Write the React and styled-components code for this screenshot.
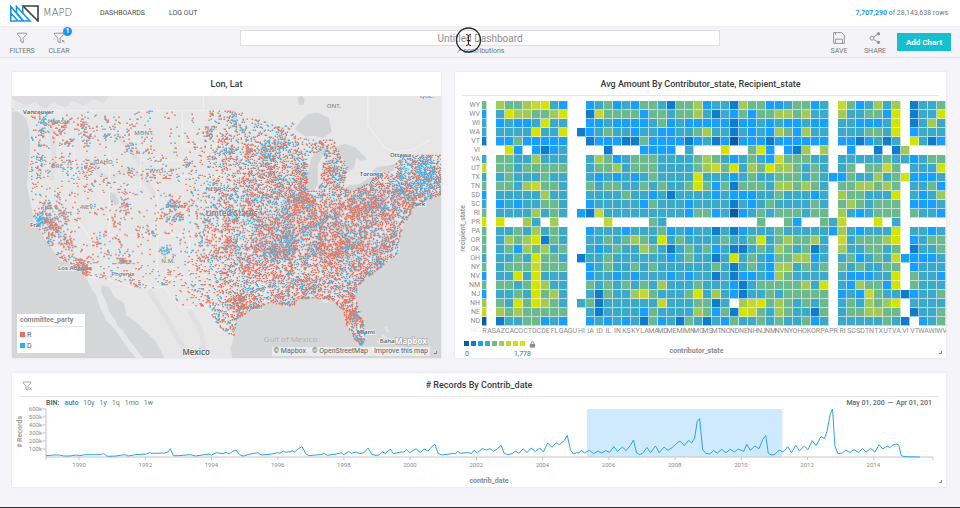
import React from "react";
import styled, { createGlobalStyle, css } from "styled-components";

const GlobalStyle = createGlobalStyle`
  * { box-sizing: border-box; }
  body {
    margin: 0;
    background: #f5f4f8;
    color: #444;
    font-family: Roboto, "Liberation Sans", sans-serif;
    font-size: 7px;
    line-height: 8px;
  }
  button, input { font-family: inherit; }
`;

/* ---------- shell ---------- */

const Page = styled.div`
  min-height: 100vh;
  border-bottom: 1px solid #2e2e30;
`;

const Nav = styled.nav`
  display: flex;
  align-items: center;
  height: 27px;
  padding: 0 12px 0 10px;
  background: #fff;
  border-bottom: 1px solid #ededf0;
`;

const Brand = styled.a`
  display: flex;
  align-items: center;
  gap: 4px;
  width: 90px;
  color: #55565a;
  text-decoration: none;
  font: 200 10px/12px "DejaVu Sans", sans-serif;
`;

const NavLink = styled.a`
  margin-right: 24px;
  color: #4c4c50;
  font-size: 7px;
  text-decoration: none;
`;

const RowCount = styled.div`
  margin-left: auto;
  font-size: 7px;
  color: #77777b;
  b { color: #1e9be6; }
`;

const Toolbar = styled.header`
  display: grid;
  grid-template-columns: 1fr 50% 1fr;
  height: 31px;
  background: #f4f3f7;
  border-bottom: 1px solid #e4e4e7;
`;

const Tools = styled.div`
  display: flex;
  align-items: center;
  gap: ${(p) => (p.$end ? 8 : 9)}px;
  padding: 0 9px 0 8px;
  justify-content: ${(p) => (p.$end ? "flex-end" : "flex-start")};
`;

const ToolButton = styled.button`
  position: relative;
  display: flex;
  flex-direction: column;
  align-items: center;
  gap: 3px;
  width: 28px;
  margin: 0;
  padding: 2px 0 0;
  border: 0;
  background: none;
  color: #77777b;
  font-size: 7px;
  line-height: 8px;
  svg { color: #8e8e92; }
`;

const Badge = styled.span`
  position: absolute;
  top: -3px;
  right: 1px;
  width: 9px;
  height: 9px;
  border-radius: 50%;
  background: #1795f0;
  color: #fff;
  font-weight: 700;
  font-size: 7px;
  line-height: 9px;
  text-align: center;
`;

const AddButton = styled.button`
  height: 18px;
  width: 54px;
  padding: 0;
  border: 0;
  background: #17bfce;
  color: #fff;
  font-size: 8px;
  font-weight: 700;
`;

const TitleBlock = styled.div`
  position: relative;
  padding-top: 3px;
  text-align: center;
`;

const TitleInput = styled.input`
  display: block;
  width: 100%;
  height: 16px;
  padding: 0;
  border: 1px solid #dedee1;
  background: #fff;
  text-align: center;
  font-size: 10px;
  &::placeholder { color: #8d8d91; opacity: 1; }
`;

const Source = styled.div`
  margin-top: 1px;
  font-size: 7px;
  color: #77777b;
`;

const Pointer = styled.svg`
  position: absolute;
  top: 0;
  left: calc(50% - 25px);
`;

/* ---------- cards ---------- */

const Board = styled.main`
  display: grid;
  grid-template-columns: 429fr 491fr;
  gap: 15px 14px;
  padding: 14px 14px 20px 12px;
`;

const Card = styled.section`
  position: relative;
  display: flex;
  flex-direction: column;
  min-width: 0;
  background: #fff;
  box-shadow: 0 0 2px #d9d9dd;
  ${(p) => p.$wide && css`grid-column: 1 / -1;`}
`;

const CardHeader = styled.div`
  position: relative;
  display: flex;
  align-items: center;
  justify-content: center;
  height: 24px;
  margin: 0 7px;
  border-bottom: 1px solid ${(p) => (p.$line ? "#e8e5ea" : "transparent")};
`;

const CardTitle = styled.h2`
  margin: 0;
  color: #39393d;
  font-size: 9px;
  line-height: 10px;
  font-weight: 500;
`;

const HeaderIcon = styled.button`
  position: absolute;
  left: 3px;
  top: 6px;
  padding: 0;
  border: 0;
  background: none;
  color: #8e8e92;
`;

const Corner = styled.span`
  position: absolute;
  right: 4px;
  bottom: 4px;
  width: 3px;
  height: 3px;
  border: solid #8a8a8e;
  border-width: 0 1px 1px 0;
`;

const AxisTitle = styled.div`
  color: #8b8b8f;
  font-size: 7px;
  font-weight: 700;
  text-align: center;
  white-space: nowrap;
`;

const SideTitle = styled(AxisTitle)`
  color: #9c9ca0;
  writing-mode: vertical-rl;
  transform: rotate(180deg);
`;

/* ---------- map ---------- */

const MapFrame = styled.div`
  position: relative;
  height: 262px;
  overflow: hidden;
  background: #d5d6d7;
`;

const MapSvg = styled.svg`
  display: block;
  width: 100%;
  height: 100%;
`;

const MapLegend = styled.div`
  position: absolute;
  left: 5px;
  bottom: 5px;
  width: 68px;
  padding: 2px 2px 2px 3px;
  background: #fff;
  color: #55555a;
`;

const LegendTitle = styled.div`
  padding-bottom: 2px;
  margin-bottom: 2px;
  border-bottom: 1px solid #e4e4e6;
  color: #8b8b8f;
  font-weight: 700;
`;

const LegendItem = styled.div`
  display: flex;
  align-items: center;
  gap: 2px;
  height: 11px;
  &::before {
    content: "";
    width: 5px;
    height: 5px;
    background: ${(p) => p.$color};
  }
`;

const Credits = styled.div`
  position: absolute;
  right: 11px;
  bottom: 2px;
  display: flex;
  gap: 6px;
  padding: 0 2px;
  background: rgba(255, 255, 255, 0.5);
  a { color: #66666a; text-decoration: none; font-size: 7px; line-height: 9px; }
`;

/* ---------- heat map ---------- */

const Heat = styled.div`
  display: grid;
  grid-template-columns: 5px 22px minmax(0, 1fr);
  padding-top: 5px;
  overflow: hidden;
`;

const HeatSide = styled(SideTitle)`
  align-self: center;
  justify-self: center;
  margin: 20px 0 0 10px;
`;

const RowLabels = styled.div`
  padding-right: 2px;
  color: #8b8b8f;
  text-align: right;
`;

const RowLabel = styled.div`
  height: 9px;
  line-height: 8px;
  color: ${(p) => (p.$faint ? "#ececef" : "inherit")};
`;

const Cells = styled.div`
  display: grid;
  grid-template-columns: 5px repeat(51, minmax(0, 1fr));
  grid-auto-rows: 9px;
`;

const PALETTE = ["#0b5ca4", "#0f7ccc", "#189fff", "#3ca9c8", "#6cb98f", "#a3ca57", "#c6d735", "#d0dd18", "#d3e400"];

const Cell = styled.span`
  border: solid rgba(255, 255, 255, 0.6);
  border-width: 0 1px 1px 0;
  background: ${(p) => PALETTE[p.$level] || "#fff"};
`;

const ColLabel = styled.span`
  display: flex;
  justify-content: center;
  padding-top: 1px;
  color: #8b8b8f;
  line-height: 8px;
`;

const HeatFooter = styled.div`
  display: grid;
  grid-template-columns: 1fr auto 1fr;
  padding: 6px 9px 0 9px;
`;

const FooterTitle = styled(AxisTitle)`
  align-self: end;
  padding: 0 8px 3px 0;
`;

const Scale = styled.div`
  display: grid;
  grid-template-columns: 61px 10px;
  gap: 2px 4px;
`;

const Swatches = styled.div`
  display: grid;
  grid-template-columns: repeat(9, 1fr);
  gap: 2px;
  height: 5px;
`;

const Swatch = styled.span`
  background: ${(p) => PALETTE[p.$level]};
`;

const ScaleEnds = styled.div`
  grid-column: 1 / -1;
  display: flex;
  justify-content: space-between;
  padding: 0 8px 0 1px;
  color: #66666a;
`;

/* ---------- time line ---------- */

const BinRow = styled.div`
  display: flex;
  gap: 5px;
  padding: 2px 14px 2px 34px;
  color: #66666a;
  font-size: 7px;
`;

const BinButton = styled.button`
  padding: 0;
  border: 0;
  background: none;
  color: ${(p) => (p.$on ? "#1e9be6" : "#77777b")};
  font-weight: ${(p) => (p.$on ? 700 : 400)};
  font-size: 7px;
  line-height: 8px;
`;

const DateRange = styled.div`
  display: flex;
  gap: 3px;
  margin-left: auto;
  font-weight: 500;
`;

const Timeline = styled.div`
  display: grid;
  grid-template-columns: 9px 21px minmax(0, 1fr);
  padding: 0 13px 0 4px;
`;

const PlotSide = styled(SideTitle)`
  align-self: start;
  margin-top: 7px;
`;

const YTicks = styled.div`
  display: grid;
  grid-template-rows: repeat(6, 8px);
  margin-top: -4px;
  padding-right: 4px;
  color: #8b8b8f;
  font-size: 6px;
  text-align: right;
`;

const Plot = styled.svg`
  display: block;
  width: 100%;
  height: 52px;
  overflow: visible;
  path, line { vector-effect: non-scaling-stroke; }
`;

const XTicks = styled.div`
  display: grid;
  grid-template-columns: repeat(13, 1fr);
  padding-right: 3%;
  color: #8b8b8f;
  font-size: 6px;
  text-align: center;
`;

const XTitle = styled(AxisTitle)`
  padding: 8px 0 2px 20px;
`;

/* ---------- data ---------- */

const COLS = "R AS AZ CA CO CT DC DE FL GA GU HI IA ID IL IN KS KY LA MA MD ME MI MN MO MS MT NC ND NE NH NJ NM NV NY OH OK OR PA PR RI SC SD TN TX UT VA VI VT WA WI WV".split(" ");

const ROWS = [
  ["WY", "4. 54456832 .. 2342324431445 23315442234423 . 6423535 . 1334"],
  ["WV", "2. 38554458 .. 1644442443445 31324244554533 . 5334428 . 1338"],
  ["WI", "3. 23223833 .. 2232222342322 22212232322322 . 3322238 . 1353"],
  ["WA", "3. 33338338 .1 2343323322334 53313232542533 . 3334438 . 2333"],
  ["VT", "1. 22422222 .. 1222114222212 31202221222222 . 2212313 . 8312"],
  ["VI", ".. .82.2123 .. ..1...2222.3. ..8..482.215.5 . .2..1.1 5 ...."],
  ["VA", "3. 44335333 .. 3542344433334 54323432644433 . 3333343 3 2344"],
  ["UT", "6. 44344444 .. 3445344433334 56483548554343 . 34.4464 . 3338"],
  ["TX", "3. 34333433 .. 3232323433338 33323433444343 2 2433534 8 2223"],
  ["TN", "4. 44356443 .. 4344334343348 42414443554543 . 4455454 . 3342"],
  ["SD", "2. 33333533 .. 3333433231333 32322233433323 . 5443338 . 3235"],
  ["SC", "3. 23233443 .. 2333332433323 33313234333343 . 4543444 . 2223"],
  ["RI", "4. 33335343 .2 1633333333324 42302343444344 . 5323444 . 4332"],
  ["PR", "8. 8..53.5. .. ..6....43.... ......4..42..4 3 6...8.3 . ...."],
  ["PA", "4. 33435343 .. 2333233342323 31312333433333 2 5323338 . 3323"],
  ["OR", "4. 35458143 .. 3343454383433 33433483454453 . 6344458 . 2344"],
  ["OK", "4. 34254534 .. 3234335431343 42311343543413 . 5334434 . 1334"],
  ["OH", "3. 33438443 .1 3343333332343 31383432445523 . 3423436 2 2223"],
  ["NY", "4. 34446444 .. 2343343433333 34313432553434 . 4343344 . 2333"],
  ["NV", "2. 33838333 .. 2332323332323 31312232543333 . 3222338 . 4332"],
  ["NM", "4. 44348533 .. 4343434353334 33321344444538 . 3254428 . 4333"],
  ["NJ", "2. 33438453 .. 3143356433348 35321334344444 . 2326433 1 2334"],
  ["NH", "5. 43848543 .3 4133333363334 413.5684543434 . 3435458 . 3333"],
  ["NE", "6. 54544444 .. 3133332433335 42418643543314 . 3445544 . 1334"],
  ["ND", "0. 13344232 .. 2323231423143 13243343433423 . 3333343 1 .234"],
].map(([name, cells]) => ({ name, cells: cells.replace(/ /g, "").split("") }));

const SERIES =
  "76,273 90,271 98,271 105,274 115,274 125,271 131,273 140,270 165,270 170,266 175,274 180,275 190,274 205,270 210,274 222,270 240,268 245,264 250,266 270,265 275,262 279,252 284,273 292,273 305,271 312,270 320,274 335,270 342,268 346,271 354,264 365,267 370,263 375,268 380,261 386,256 392,270 398,274 410,268 422,264 427,271 445,268 455,264 458,266 463,259 468,263 478,259 482,262 488,252 494,246 500,267 505,273 515,271 525,270 530,266 535,272 550,268 558,264 562,270 570,261 575,266 582,262 588,267 595,264 602,250 608,270 615,272 620,271 625,262 630,266 638,253 643,267 655,262 660,262 665,255 670,264 680,252 687,264 693,253 700,259 705,247 711,239 716,266 722,271 735,268 740,266 745,267 748,260 752,266 765,264 770,266 775,257 780,265 788,252 795,256 801,252 806,260 812,254 819,242 824,266 830,270 838,266 842,259 848,266 855,252 861,264 868,250 875,261 882,250 888,262 895,235 902,248 909,234 914,240 922,228 927,212 932,255 937,268 942,264 946,265 950,257 955,265 963,257 970,267 977,259 983,265 990,258 996,263 1003,246 1009,260 1017,247 1023,258 1030,242 1035,226 1040,264 1045,270 1051,264 1057,248 1063,264 1071,244 1077,264 1085,247 1091,257 1098,249 1105,237 1111,229 1118,243 1125,227 1130,235 1135,220 1139,170 1143,162 1148,255 1153,266 1159,268 1166,258 1172,265 1179,254 1186,264 1193,254 1200,262 1206,253 1215,260 1220,239 1226,257 1233,244 1240,252 1246,224 1251,213 1255,265 1260,271 1266,269 1273,256 1279,262 1287,246 1293,264 1300,241 1306,259 1314,244 1320,255 1327,228 1333,243 1341,216 1347,222 1351,200 1356,150 1360,133 1364,245 1369,267 1376,265 1382,256 1388,264 1395,255 1402,263 1409,252 1415,262 1422,251 1429,262 1436,240 1442,253 1449,244 1454,249 1458,241 1464,238 1468,241 1472,272 1476,276 1503,277";

const YEARS = [1990, 1992, 1994, 1996, 1998, 2000, 2002, 2004, 2006, 2008, 2010, 2012, 2014];
const COUNTS = ["600k", "500k", "400k", "300k", "200k", "100k"];

/* Coast lines and lakes */
const LAND =
  "M13 96V108L20 113L27 118L30 130L31 145L30 160L29 175L28 185L30 197L33 210L35 222L40 227L43 235L50 245L57 255L61 261L68 263L76 267L82 271L87 278L92 288L97 295L100 305L107 320L115 328L123 340L130 350L137 358H144L138 350L130 340L124 331L118 325L115 318L110 312L107 302L102 291L102 285L110 287L115 297L125 303L127 315L137 322L147 332L157 342L162 352L165 358H233L231 348L234 338L235 326L237 318L243 314L251 310L262 303L270 302L280 304L288 307L293 306L291 301L297 298L305 297L318 297L326 303L333 299L340 305L345 312L345 322L350 331L354 338L360 342L364 340L365 330L362 318L357 307L355 296L358 285L370 275L384 264L392 258L399 253L400 247L398 240L401 232L403 225L408 216L415 206L425 200L441 194V96Z";

const LAKES = [
  "M295 129L303 119L309 114L318 113L329 118L332 132L324 138L313 136L306 137Z",
  "M307 189L308 172L312 157L319 149L329 147L323 155L318 166L318 184L314 191Z",
  "M336 147L345 144L356 148L366 158L367 160L360 161L357 158L354 168L349 172L345 166L342 156Z",
  "M343 189L350 185L360 184L373 175L374 178L365 186L352 191L345 193Z",
  "M370 174L377 167L388 166L397 163L393 171L381 174Z",
  "M298 98l4 -2l3 4l-1 5l-5 0z",
  "M232 111l4 0l2 10l-3 6l-3 -8z",
  "M110 192l6 2l4 8l-3 4l-6 -6z",
];

const COUNTRY = [
  [28, 119], [34, 111], [232, 111], [240, 112], [262, 121], [282, 127], [295, 121], [288, 132], [307, 139], [322, 140], [334, 139],
  [336, 148], [343, 158], [348, 168], [345, 178], [343, 188], [352, 190], [370, 182], [375, 174], [394, 171], [398, 155], [441, 155],
  [441, 194], [425, 200], [415, 206], [408, 216], [403, 225], [398, 240], [400, 250], [384, 264], [370, 275], [358, 285], [355, 296],
  [358, 308], [364, 325], [365, 338], [361, 345], [354, 338], [346, 325], [343, 310], [333, 300], [318, 298], [297, 299],
  [293, 306], [270, 302], [251, 310], [237, 318], [234, 335], [222, 331], [214, 318], [207, 305], [193, 307], [182, 308],
  [172, 295], [165, 285], [150, 288], [132, 287], [105, 278], [84, 275], [68, 263], [57, 255], [43, 235], [34, 218], [28, 185], [31, 160], [31, 140],
];

/* Population centres: x, y, radius, strength, share of D */
const CITIES = [
  [43, 122, 6, 0.8, 0.65], [42, 132, 5, 0.6, 0.5], [41, 145, 4, 0.6, 0.6], [40, 158, 4, 0.9, 0.6], [39, 166, 3, 0.6, 0.6], [40, 175, 4, 0.6, 0.35], [38, 184, 4, 0.5, 0.4],
  [32, 138, 2, 0.4, 0.8], [32, 150, 2, 0.5, 0.8], [31, 162, 2, 0.4, 0.8], [31, 170, 2, 0.4, 0.8], [30, 192, 3, 0.4, 0.5], [45, 203, 6, 0.4, 0.3],
  [82, 124, 6, 0.7, 0.3], [64, 128, 7, 0.4, 0.35], [70, 142, 6, 0.4, 0.2], [86, 136, 6, 0.4, 0.4], [107, 122, 3, 0.6, 0.5], [107, 136, 3, 0.6, 0.6], [130, 147, 6, 0.4, 0.7],
  [125, 133, 6, 0.2, 0.6], [147, 150, 4, 0.4, 0.5], [53, 163, 3, 0.6, 0.1], [87, 168, 5, 0.6, 0.3], [104, 178, 4, 0.5, 0.3], [125, 205, 4, 1, 0.2],
  [124, 192, 3, 0.6, 0.2], [132, 170, 5, 0.3, 0.7], [148, 177, 5, 0.3, 0.3], [161, 160, 4, 0.4, 0.2], [46, 217, 9, 0.9, 0.5], [38, 222, 7, 0.8, 0.8],
  [55, 228, 8, 0.9, 0.25], [68, 243, 7, 0.8, 0.2], [50, 240, 5, 0.6, 0.8], [60, 257, 5, 0.7, 0.4], [74, 262, 6, 0.6, 0.5],
  [83, 265, 7, 1, 0.3], [86, 273, 5, 1, 0.2], [66, 213, 5, 0.5, 0.3], [98, 244, 3, 0.5, 0.1], [107, 252, 5, 0.4, 0.2], [123, 260, 4, 0.8, 0.2], [103, 276, 3, 0.4, 0.2],
  [131, 280, 4, 0.9, 0.2], [138, 285, 4, 0.5, 0.3], [175, 203, 6, 1, 0.45], [178, 216, 5, 0.9, 0.25], [165, 215, 9, 0.3, 0.6], [167, 250, 5, 0.9, 0.85], [153, 233, 4, 0.7, 0.4],
  [187, 163, 4, 0.7, 0.4], [164, 282, 4, 0.7, 0.5], [170, 272, 3, 0.6, 0.2], [180, 274, 3, 0.5, 0.2], [208, 132, 6, 0.3, 0.5], [233, 122, 4, 0.6, 0.5],
  [227, 150, 4, 0.8, 0.8], [268, 155, 9, 0.6, 0.5], [303, 195, 10, 0.7, 0.15], [273, 250, 15, 0.3, 0.9], [240, 300, 8, 0.9, 0.15], [228, 302, 5, 0.6, 0.1],
  [247, 268, 6, 0.5, 0.15], [424, 168, 14, 0.6, 0.9], [405, 170, 8, 0.35, 0.85], [425, 188, 10, 0.6, 0.8], [335, 255, 20, 0.35, 0.1], [365, 205, 22, 0.25, 0.1],
  [338, 180, 6, 0.4, 0.8], [352, 312, 6, 0.6, 0.2], [363, 322, 3, 0.7, 0.5], [410, 198, 9, 0.5, 0.35], [380, 262, 6, 0.3, 0.9],
];

const inside = (x, y) => {
  let hit = false;
  for (let i = 0, j = COUNTRY.length - 1; i < COUNTRY.length; j = i++) {
    const [xi, yi] = COUNTRY[i];
    const [xj, yj] = COUNTRY[j];
    if (yi > y !== yj > y && x < ((xj - xi) * (y - yi)) / (yj - yi) + xi) hit = !hit;
  }
  return hit;
};

const overLake = (x, y) => x > 307 && x < 325 - (y - 146) * 0.15 && y > 150 + (320 - x) * 0.5 && y < 191;

const hash = (a, b, s) => {
  const v = Math.sin(a * 127.1 + b * 311.7 + s * 74.7) * 43758.5453;
  return v - Math.floor(v);
};

const noise = (x, y, size, s) => {
  const gx = Math.floor(x / size);
  const gy = Math.floor(y / size);
  const fx = x / size - gx;
  const fy = y / size - gy;
  const top = hash(gx, gy, s) * (1 - fx) + hash(gx + 1, gy, s) * fx;
  const low = hash(gx, gy + 1, s) * (1 - fx) + hash(gx + 1, gy + 1, s) * fx;
  return top * (1 - fy) + low * fy;
};

const TONES = { r: "#ee6e57", d: "#33b5f0", mix: "#8f9aa3" };

/* Several passes of each tone, so that no colour always lies on top */
const buildDots = () => {
  const passes = [0, 1, 2, 3, 4].map(() => ({ mix: "", d: "", r: "" }));
  for (let y = 111; y < 346; y += 1) {
    for (let x = 26; x < 441; x += 1) {
      if (!inside(x, y) || overLake(x, y)) continue;
      const east = Math.min(1, Math.max(0, (x - 185) / 75));
      const south = Math.min(1, Math.max(0, (y - 120) / 60));
      const patch = noise(x, y, 8, 1) * 0.6 + noise(x, y, 3, 2) * 0.4;
      let density = 0.012 + (patch > 0.6 ? 0.09 : 0) + east * (0.1 + 0.23 * south) * (0.2 + patch * 1.5);
      let blue = 0.3 + (noise(x, y, 12, 5) - 0.5) * 0.5 + (noise(x, y, 4, 6) - 0.5) * 0.4;
      for (const [cx, cy, r, k, share] of CITIES) {
        const dd = ((x - cx) ** 2 + (y - cy) ** 2) / (r * r);
        if (dd < 3) {
          const w = k * Math.exp(-dd * 1.3);
          density += w * 0.5;
          blue += (share - blue) * Math.min(1, w * 1.8);
        }
      }
      if (hash(x, y, 9) > density) continue;
      const c = hash(x, y, 17);
      const key = hash(x, y, 23) < 0.1 + 0.08 * east ? "mix" : c < blue ? "d" : "r";
      passes[Math.floor(hash(x, y, 31) * 5)][key] += `M${x} ${y + 0.5}h1.5`;
    }
  }
  return passes;
};

const DOTS = buildDots();

const PLACES = [
  ["Vancouver", 24, 114, 6, "#55565a"], ["Ottawa", 390, 157, 6, "#66676b"], ["Toronto", 360, 176, 6, "#55565a"],
  ["York", 412, 206, 6, "#55565a"], ["Fra", 31, 227, 6, "#55565a"], ["Los Angeles", 59, 270, 6, "#66676b"],
  ["Phoenix", 112, 276, 6, "#77787b"], ["Denver", 166, 208, 6, "#77787b"], ["Houston", 238, 309, 6, "#77787b"],
  ["Miami", 357, 334, 6, "#55565a"], ["Bahamas", 380, 343, 6, "#66676b"], ["United States", 206, 216, 8, "#77787b"], ["Mexico", 183, 355, 8, "#55565a"],
];

const REGIONS = [
  ["WASH.", 52, 124], ["MONT.", 135, 135], ["IDAHO", 94, 164], ["ORE.", 52, 168], ["WYO.", 150, 173], ["NEV.", 82, 209],
  ["N.D.", 205, 130], ["S.D.", 207, 160], ["NEBR.", 206, 191], ["ARIZ.", 119, 264], ["N.M.", 162, 263], ["ONT.", 327, 108], ["QUE.", 420, 98],
];

/* ---------- drawings ---------- */

const Logo = () => (
  <svg width="29" height="17" viewBox="0 0 29 17" fill="none" strokeWidth="1.600" aria-hidden="true">
    <path d="M13 1H28V16Z" stroke="#3c3f45" />
    <path d="M.8 1.500V16H13L.8 1.500ZM.8 8L8 16M6.500 7.500V1.500L20 16H13.500L6.500 7.500" stroke="#1a96ea" />
    <path d="M12.800 2V8" stroke="#1a96ea" />
  </svg>
);

const Funnel = ({ cross, size = 12 }) => (
  <svg width={size} height={size} viewBox="0 0 12 12" fill="none" stroke="currentColor" strokeWidth="0.900" aria-hidden="true">
    <path d="M1.500 1.200H10.500V2.500L7.200 6.200V10.800L4.800 9.500V6.200L1.500 2.500Z" />
    {cross && <path d="M8.800 7.800L11.500 10.600M11.500 7.800L8.800 10.600" />}
  </svg>
);

const SaveIcon = () => (
  <svg width="12" height="12" viewBox="0 0 12 12" fill="none" stroke="currentColor" strokeWidth="0.900" aria-hidden="true">
    <path d="M.6 .6H8.600L11.400 3.400V11.400H.6ZM2.500 11.400V7.200H9.500V11.400M2.500 .6V2.800" />
  </svg>
);

const ShareIcon = () => (
  <svg width="12" height="12" viewBox="0 0 12 12" fill="none" stroke="currentColor" strokeWidth="0.900" aria-hidden="true">
    <circle cx="3" cy="6.200" r="2" />
    <path d="M4.600 5L8.800 2.200M4.600 7.500L8.800 10" />
    <circle cx="9.500" cy="1.800" r="1.200" fill="currentColor" />
    <circle cx="9.500" cy="10.400" r="1.200" fill="currentColor" />
  </svg>
);

const LockIcon = () => (
  <svg width="7" height="7" viewBox="0 0 7 8" aria-hidden="true">
    <path d="M1.800 4V2.400a1.700 1.700 0 0 1 3.400 0V4" fill="none" stroke="#8b8b8f" />
    <rect x=".5" y="3.500" width="6" height="4" fill="#8b8b8f" />
  </svg>
);

const PointMap = () => (
  <MapSvg viewBox="13 96 428 262" preserveAspectRatio="xMidYMid slice" role="img" aria-label="Contributions by longitude and latitude">
    <path d={LAND} fill="#e7e7e8" />
    <path d="M13 96H110L104 104L95 99L84 106L74 101L66 108L54 103L45 109L36 102L27 106L13 99Z" fill="#dddddf" />
    <path d="M50 120q8 30 2 60M95 165q10 20 25 8t35 22M150 290l18 30l20 34M190 310l12 22l3 20M60 230l14 25M118 135l25 30" fill="none" stroke="#e0e0e2" strokeWidth="5" />
    {LAKES.map((d) => <path key={d} d={d} fill="#d3d4d6" />)}
    <path d="M13 111H232M204 96V111M368 96V126L385 148L395 152L413 150L430 140M61 111V148H75V190M110 145V187H141V160H183M183 111V146H225M183 176H230M158 183V285M75 187V215L105 258M110 190V235H230M190 236V278H165M85 277L105 278L132 287H165L182 308L207 305L222 331" fill="none" stroke="#f1f1f2" />
    <path d="M377 341l3 1M382 335l4 2M386 327l2 5M372 346l3 5" stroke="#e7e7e8" strokeWidth="2" />
    <g fontFamily="'Open Sans', sans-serif">
      {REGIONS.map(([t, x, y]) => <text key={t} x={x} y={y} fontSize="6" fontWeight="600" fill="#8b8c90">{t}</text>)}
      <text x="264" y="342" fontSize="8" fill="#b0b2b4">Gulf of Mexico</text>
      {PLACES.map(([t, x, y, s, c]) => (
        <text key={t} x={x} y={y} fontSize={s} fontWeight="600" fill={c} stroke="#f0f0f0" strokeWidth="1.500" paintOrder="stroke">{t}</text>
      ))}
    </g>
    <g strokeWidth="1.400" opacity="0.92">
      {DOTS.map((pass, i) =>
        Object.entries(pass).map(([tone, d]) => <path key={i + tone} d={d} stroke={TONES[tone]} />)
      )}
    </g>
    <text x="395" y="344" fontFamily="'Open Sans', sans-serif" fontSize="8" fontWeight="700" fill="#fff" stroke="#9b9c9e" strokeWidth="1.200" paintOrder="stroke">Mapbox</text>
  </MapSvg>
);

const TimePlot = () => (
  <Plot viewBox="76 133 1448 156" preserveAspectRatio="none" role="img" aria-label="Records by contribution date">
    <rect x="959" y="133" width="319" height="144" fill="#cfeafd" />
    <path d="M76 133V286M76 277H1524M1524 277V286" fill="none" stroke="#c4c4c8" />
    {YEARS.map((y) => {
      const x = 130 + (y - 1990) * 54.05;
      return <line key={y} x1={x} x2={x} y1="277" y2="286" stroke="#c4c4c8" />;
    })}
    {COUNTS.map((c, i) => <line key={c} x1="70" x2="76" y1={133 + i * 24} y2={133 + i * 24} stroke="#c4c4c8" />)}
    <path d={"M" + SERIES.replace(/ /g, "L")} fill="none" stroke="#27a5e6" />
  </Plot>
);

export default function App() {
  return (
    <Page>
      <GlobalStyle />
      <Nav>
        <Brand href="#home"><Logo />MAPD</Brand>
        <NavLink href="#dashboards">DASHBOARDS</NavLink>
        <NavLink href="#logout">LOG OUT</NavLink>
        <RowCount><b>7,707,290</b> of 28,143,638 rows</RowCount>
      </Nav>

      <Toolbar>
        <Tools>
          <ToolButton><Funnel />FILTERS</ToolButton>
          <ToolButton><Funnel cross />CLEAR<Badge>1</Badge></ToolButton>
        </Tools>
        <TitleBlock>
          <TitleInput aria-label="Dashboard title" placeholder="Untitled Dashboard" />
          <Source>↗ contributions</Source>
          <Pointer width="27" height="27" viewBox="0 0 27 27" fill="none" stroke="#2b2b2e" aria-hidden="true">
            <circle cx="13.500" cy="13" r="12" strokeWidth="1.300" />
            <path d="M11 7.500q2.500 0 2.500 1.500q0 -1.500 2.500 -1.500M13.500 9V17M11 18.500q2.500 0 2.500 -1.500q0 1.500 2.500 1.500M12 13.500h3" />
          </Pointer>
        </TitleBlock>
        <Tools $end>
          <ToolButton><SaveIcon />SAVE</ToolButton>
          <ToolButton><ShareIcon />SHARE</ToolButton>
          <AddButton>Add Chart</AddButton>
        </Tools>
      </Toolbar>

      <Board>
        <Card>
          <CardHeader><CardTitle>Lon, Lat</CardTitle></CardHeader>
          <MapFrame>
            <PointMap />
            <MapLegend>
              <LegendTitle>committee_party</LegendTitle>
              <LegendItem $color="#ee6b57">R</LegendItem>
              <LegendItem $color="#22b4ea">D</LegendItem>
            </MapLegend>
            <Credits>
              <a href="#mapbox">© Mapbox</a>
              <a href="#osm">© OpenStreetMap</a>
              <a href="#improve">Improve this map</a>
            </Credits>
          </MapFrame>
          <Corner />
        </Card>

        <Card>
          <CardHeader $line><CardTitle>Avg Amount By Contributor_state, Recipient_state</CardTitle></CardHeader>
          <Heat>
            <HeatSide>recipient_state</HeatSide>
            <RowLabels>
              {ROWS.map((r) => <RowLabel key={r.name}>{r.name}</RowLabel>)}
              <RowLabel $faint>NC</RowLabel>
            </RowLabels>
            <Cells>
              {ROWS.map((r) => r.cells.map((c, i) => <Cell key={r.name + i} $level={c} />))}
              {COLS.map((c) => <ColLabel key={c}>{c}</ColLabel>)}
            </Cells>
          </Heat>
          <HeatFooter>
            <Scale>
              <Swatches>{PALETTE.map((c, i) => <Swatch key={c} $level={i} />)}</Swatches>
              <LockIcon />
              <ScaleEnds><span>0</span><span>1,778</span></ScaleEnds>
            </Scale>
            <FooterTitle>contributor_state</FooterTitle>
          </HeatFooter>
          <Corner />
        </Card>

        <Card $wide>
          <CardHeader $line>
            <HeaderIcon aria-label="Clear chart filter"><Funnel cross size={10} /></HeaderIcon>
            <CardTitle># Records By Contrib_date</CardTitle>
          </CardHeader>
          <BinRow>
            <b>BIN:</b>
            <BinButton $on>auto</BinButton>
            {["10y", "1y", "1q", "1mo", "1w"].map((b) => <BinButton key={b}>{b}</BinButton>)}
            <DateRange><span>May 01, 200</span><span>—</span><span>Apr 01, 201</span></DateRange>
          </BinRow>
          <Timeline>
            <PlotSide># Records</PlotSide>
            <YTicks>{COUNTS.map((t) => <span key={t}>{t}</span>)}</YTicks>
            <div>
              <TimePlot />
              <XTicks>{YEARS.map((y) => <span key={y}>{y}</span>)}</XTicks>
            </div>
          </Timeline>
          <XTitle>contrib_date</XTitle>
          <Corner />
        </Card>
      </Board>
    </Page>
  );
}
